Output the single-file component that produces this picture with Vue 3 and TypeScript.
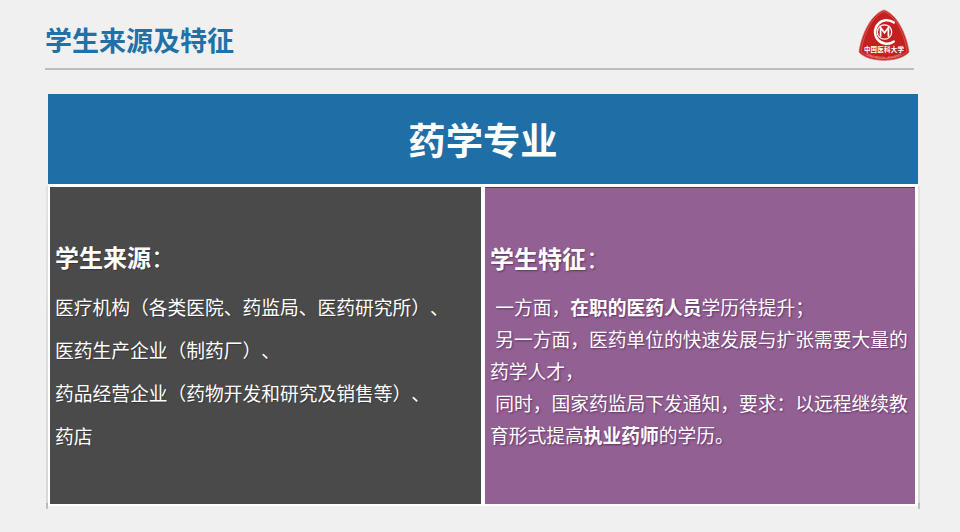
<script setup lang="ts">
const sourceLines: string[] = [
  '医疗机构（各类医院、药监局、医药研究所）、',
  '医药生产企业（制药厂）、',
  '药品经营企业（药物开发和研究及销售等）、',
  '药店',
]
</script>

<template>
  <div class="page">
    <header class="head">
      <h1 class="title">学生来源及特征</h1>
      <svg class="logo" width="56" height="56" viewBox="0 0 56 56">
        <path d="M28 2 C40 6 50 24 53 44 C44 55 12 55 3 44 C6 24 16 6 28 2 Z" fill="#c4201f" stroke="#d8605a" stroke-width="0.800"/>
        <path d="M28 3.500 C39 7.500 48 24 51 43.500 C42 53 14 53 5 43.500 C8 24 17 7.500 28 3.500 Z" fill="none" stroke="#e58a84" stroke-width="0.500"/>
        <path d="M37.800 14.500 A11.800 11.800 0 1 0 37.800 33.500" fill="none" stroke="#fff" stroke-width="2.400" stroke-linecap="round"/>
        <circle cx="28.500" cy="24" r="7.200" fill="none" stroke="#fff" stroke-width="1.300"/>
        <path d="M24.600 28.800 V19.500 L28.500 24.800 L32.400 19.500 V28.800" fill="none" stroke="#fff" stroke-width="1.700"/>
        <text x="28" y="43.500" text-anchor="middle" class="logo-text">中国医科大学</text>
        <path id="logo-arc" d="M9 46 C18 52 38 52 47 46" fill="none"/>
        <text class="logo-arc-text"><textPath href="#logo-arc" startOffset="50%" text-anchor="middle">CHINA MEDICAL UNIVERSITY</textPath></text>
      </svg>
    </header>
    <section class="board">
      <h2 class="banner">药学专业</h2>
      <div class="cells">
        <div class="cell dark">
          <h3 class="label"><b>学生来源</b>：</h3>
          <p v-for="line in sourceLines" :key="line" class="src">{{ line }}</p>
        </div>
        <div class="cell purple">
          <h3 class="label label-r"><b>学生特征</b>：</h3>
          <p class="txt">&nbsp;一方面，<b>在职的医药人员</b>学历待提升；</p>
          <p class="txt">&nbsp;另一方面，医药单位的快速发展与扩张需要大量的药学人才，</p>
          <p class="txt">&nbsp;同时，国家药监局下发通知，要求：以远程继续教育形式提高<b>执业药师</b>的学历。</p>
        </div>
      </div>
    </section>
  </div>
</template>

<style>
html, body { margin: 0; background: #f0f0f0; }
</style>

<style scoped>
.page {
  width: 960px;
  height: 532px;
  overflow: hidden;
  background: #f0f0f0;
  font-family: "Liberation Sans", "Noto Sans CJK SC", sans-serif;
  text-spacing-trim: space-all;
  box-sizing: border-box;
  padding-left: 45px;
}
.head {
  width: 869px;
  height: 70px;
  box-sizing: border-box;
  border-bottom: 2px solid #bdbdbd;
  display: flex;
  justify-content: space-between;
  align-items: flex-start;
}
.title {
  margin: 25px 0 0;
  font-size: 27px;
  line-height: 34px;
  font-weight: 700;
  color: #2170a8;
}
.logo { margin: 8px 2px 0 0; }
.logo-text { font-size: 6.500px; letter-spacing: 0.200px; font-weight: 700; fill: #fff; }
.logo-arc-text { font-size: 2.600px; fill: #f7dcd8; }
.board {
  position: relative;
  width: 870px;
  margin: 24px 0 0 3px;
}
.board::before,
.board::after {
  content: "";
  position: absolute;
  top: 92px;
  width: 2px;
  height: 323px;
  background: linear-gradient(#e2e2e2, #d8d8d8 98%, #b4b4b4 98%, #c4c4c4);
}
.board::before { left: -2px; }
.board::after { right: -2px; }
.banner {
  margin: 0;
  height: 90px;
  line-height: 96px;
  background: #206ea6;
  color: #fff;
  font-size: 37.330px;
  font-weight: 700;
  text-align: center;
}
.cells {
  display: flex;
  gap: 4px;
  height: 322px;
  box-sizing: border-box;
  background: #fff;
  padding: 3px 3px 2px 2px;
}
.cell {
  color: #fff;
  box-sizing: border-box;
  display: flex;
  flex-direction: column;
  padding-top: 56px;
}
.dark {
  width: 431px;
  background: #4a4a4a;
  padding-left: 5px;
  text-shadow: 1px 1px 1px rgba(0,0,0,.25);
}
.purple {
  width: 430px;
  background: #936093;
  padding-left: 5px;
  padding-right: 5px;
  border-top: 1px solid #5f2a80;
  text-shadow: 1px 1px 2px rgba(60,20,70,.6);
}
.label {
  margin: 0;
  font-size: 24px;
  line-height: 32px;
  font-weight: 400;
}
.label b { font-weight: 700; }
.src {
  margin: 0;
  font-size: 18.750px;
  line-height: 43.300px;
  white-space: nowrap;
}
.src:first-of-type { margin-top: 11.500px; }
.label-r { margin-bottom: 17px; }
.txt {
  margin: 0;
  font-size: 18.750px;
  line-height: 32px;
  width: 420px;
}
.txt b { font-weight: 700; }
</style>
